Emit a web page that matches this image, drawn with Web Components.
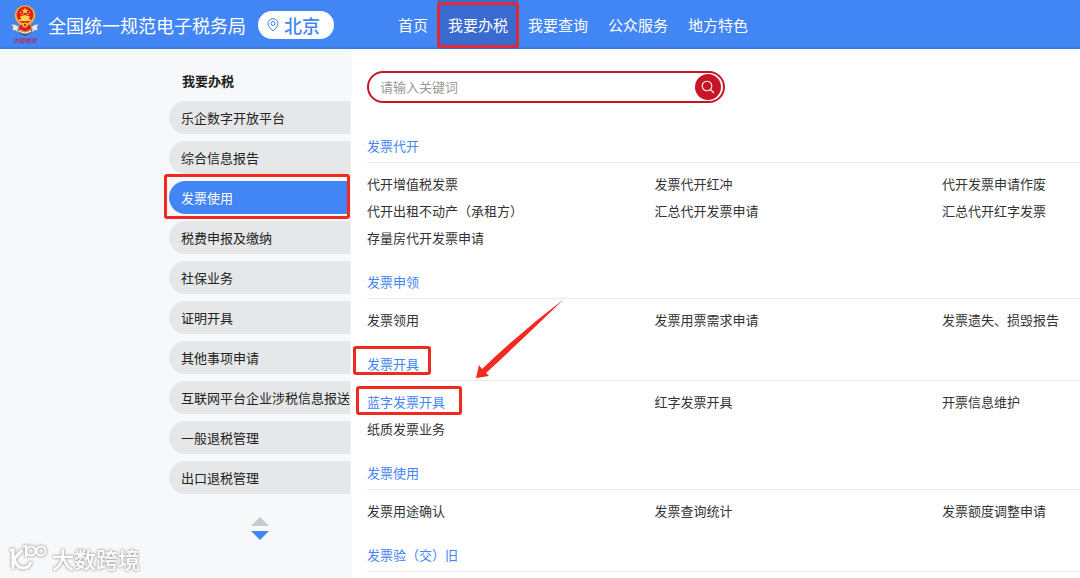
<!DOCTYPE html>
<html lang="zh-CN">
<head>
<meta charset="UTF-8">
<meta name="viewport" content="width=device-width, initial-scale=1">
<title>全国统一规范电子税务局</title>
<style>
    :root {
        --color-blue: #4285f4;
        --color-blue-dark: #386acf;
        --color-red: #c71526;
        --color-mark: #f3281f;
        --color-text: #333;
    }
    body {
        margin: 0;
        font-family: "Noto Sans CJK SC", "Noto Sans", sans-serif;
        font-size: 13px;
        line-height: 20px;
        color: var(--color-text);
    }
</style>
</head>
<body>
<tax-app></tax-app>

<script>
// Site header: emblem, site name, region button and the slotted navigation
class TaxHeader extends HTMLElement {
    constructor() {
        super();
        this.attachShadow({ mode: 'open' });
        this.shadowRoot.innerHTML = `
            <style>
                :host {
                    display: block;
                    flex: none;
                    background: linear-gradient(to top, #3a74d8, var(--color-blue) 3px);
                    color: white;
                }
                header {
                    display: flex;
                    align-items: center;
                    height: 49px;
                    padding-left: 10px;
                }
                .emblem {
                    width: 30px;
                    height: 42px;
                }
                h1 {
                    margin: 0 12px 0 8px;
                    font-size: 18px;
                    font-weight: 400;
                    white-space: nowrap;
                }
                button {
                    display: flex;
                    align-items: center;
                    gap: 5px;
                    height: 28px;
                    padding: 0 14px 0 9px;
                    border: 0;
                    border-radius: 14px;
                    background: white;
                    color: var(--color-blue);
                    font: 500 18px/28px "Noto Sans CJK SC", sans-serif;
                    white-space: nowrap;
                }
                nav {
                    display: flex;
                    align-self: stretch;
                    margin-left: 54px;
                }
            </style>
            <header>
                <svg class="emblem" viewBox="0 0 30 42" aria-hidden="true">
                    <path d="M1 20 Q6 20 9 23 L21 23 Q24 20 29 20 L27 23 L28 26 Q23 26 20 30 L10 30 Q7 26 2 26 L3 23 Z" fill="#e8edf2" stroke="#727d89" stroke-width="0.6"/>
                    <path d="M7 24 Q15 32 23 24 L21 29 L15 32 L9 29 Z" fill="#46515e"/>
                    <path d="M9 27 Q15 31 21 27" fill="none" stroke="#f5f6f7" stroke-width="1.5"/>
                    <path d="M10 20 L20 20 L22 25 L15 28 L8 25 Z" fill="#d91f1d" stroke="#e8a137" stroke-width="0.8"/>
                    <circle cx="15" cy="11.5" r="10.2" fill="#efb23d"/>
                    <circle cx="15" cy="11" r="8.4" fill="#e3201b"/>
                    <path d="M15 3.5 l1 2.3 2.5 .1 -2 1.6 .7 2.4 -2.2 -1.4 -2.2 1.4 .7 -2.4 -2 -1.6 2.5 -.1 Z" fill="#ffd84a"/>
                    <g fill="#ffd84a">
                        <circle cx="10.5" cy="8.5" r="0.7"/>
                        <circle cx="12" cy="10.5" r="0.7"/>
                        <circle cx="18" cy="10.5" r="0.7"/>
                        <circle cx="19.5" cy="8.5" r="0.7"/>
                        <path d="M10 12.5 L15 11 L20 12.5 V13.5 H19 V15.5 H21 V17 H9 V15.5 H11 V13.5 H10 Z"/>
                    </g>
                    <circle cx="15" cy="21" r="2.6" fill="#f2bc43"/>
                    <circle cx="15" cy="21" r="1.2" fill="#d91f1d"/>
                    <text x="15" y="39" text-anchor="middle" font-size="6" font-weight="500" font-style="italic" fill="#b32350">中国税务</text>
                </svg>
                <h1>全国统一规范电子税务局</h1>
                <button type="button">
                    <svg width="12" height="14" viewBox="0 0 12 14" fill="none" stroke="currentColor" aria-hidden="true">
                        <path d="M6 13 C3 10 1 8 1 5.5 A5 4.8 0 0 1 11 5.5 C11 8 9 10 6 13 Z"/>
                        <circle cx="6" cy="5.5" r="2"/>
                    </svg>
                    北京
                </button>
                <nav><slot></slot></nav>
            </header>
        `;
    }
}

// Top level navigation link
class NavItem extends HTMLElement {
    constructor() {
        super();
        this.attachShadow({ mode: 'open' });
        this.shadowRoot.innerHTML = `
            <style>
                :host {
                    display: flex;
                    position: relative;
                }
                a {
                    display: flex;
                    align-items: center;
                    padding: 0 10px;
                    color: white;
                    font-size: 15px;
                    text-decoration: none;
                    white-space: nowrap;
                }
                :host([active]) a {
                    background: var(--color-blue-dark);
                }
                :host([active])::after {
                    content: "";
                    position: absolute;
                    inset: 2px -1px 1px;
                    border: 3px solid #dc2a38;
                    border-radius: 3px;
                    pointer-events: none;
                }
            </style>
            <a href="#"><slot></slot></a>
        `;
    }
}

// Left column with the list of tax services and its scroll buttons
class SideMenu extends HTMLElement {
    constructor() {
        super();
        this.attachShadow({ mode: 'open' });
        this.shadowRoot.innerHTML = `
            <style>
                :host {
                    display: block;
                    flex: 0 0 350px;
                    box-sizing: border-box;
                    padding: 22px 0 0 169px;
                    background: #f7f8fa;
                }
                h2 {
                    margin: 0 0 10px 13px;
                    font-size: 13px;
                    font-weight: 700;
                    line-height: 20px;
                    color: #222;
                }
                nav {
                    display: flex;
                    flex-direction: column;
                    gap: 7px;
                }
                .pager {
                    display: flex;
                    flex-direction: column;
                    align-items: center;
                    gap: 5px;
                    margin-top: 23px;
                }
                button {
                    display: block;
                    padding: 0;
                    border: 0;
                    background: none;
                    line-height: 0;
                    color: #c8c9cb;
                }
                .next {
                    color: var(--color-blue);
                }
            </style>
            <h2>我要办税</h2>
            <nav aria-label="我要办税"><slot></slot></nav>
            <div class="pager">
                <button type="button" aria-label="上一页">
                    <svg width="18" height="9" viewBox="0 0 18 9"><path d="M9 0 L18 9 H0 Z" fill="currentColor"/></svg>
                </button>
                <button type="button" class="next" aria-label="下一页">
                    <svg width="18" height="9" viewBox="0 0 18 9"><path d="M0 0 H18 L9 9 Z" fill="currentColor"/></svg>
                </button>
            </div>
        `;
    }
}

class SideItem extends HTMLElement {
    constructor() {
        super();
        this.attachShadow({ mode: 'open' });
        this.shadowRoot.innerHTML = `
            <style>
                :host {
                    display: block;
                    position: relative;
                }
                a {
                    display: block;
                    padding-left: 12px;
                    border-radius: 17px 0 0 17px;
                    background: #e6e7e9;
                    color: #222;
                    line-height: 33px;
                    text-decoration: none;
                    white-space: nowrap;
                }
                :host([active]) a {
                    background: var(--color-blue);
                    color: white;
                }
                :host([active])::after {
                    content: "";
                    position: absolute;
                    inset: -7px 0 -5px -5px;
                    border: 3px solid var(--color-mark);
                    border-radius: 3px;
                    pointer-events: none;
                }
            </style>
            <a href="#"><slot></slot></a>
        `;
    }
}

// Rounded keyword search
class SearchBox extends HTMLElement {
    constructor() {
        super();
        this.attachShadow({ mode: 'open' });
        this.shadowRoot.innerHTML = `
            <style>
                :host {
                    display: block;
                    max-width: 358px;
                }
                form {
                    display: flex;
                    align-items: center;
                    box-sizing: border-box;
                    height: 32px;
                    padding: 0 2px 0 11px;
                    border: 2px solid var(--color-red);
                    border-radius: 16px;
                    background: white;
                }
                input {
                    flex: 1;
                    min-width: 0;
                    padding: 0;
                    border: 0;
                    outline: 0;
                    background: none;
                    font: inherit;
                }
                input::placeholder {
                    color: #999;
                }
                button {
                    display: grid;
                    place-items: center;
                    width: 26px;
                    height: 26px;
                    padding: 0;
                    border: 0;
                    border-radius: 50%;
                    background: var(--color-red);
                    color: white;
                }
            </style>
            <form>
                <input type="text" aria-label="请输入关键词" placeholder="请输入关键词">
                <button type="button" aria-label="搜索">
                    <svg width="14" height="14" viewBox="0 0 14 14" fill="none" stroke="currentColor" stroke-width="1.1">
                        <circle cx="6" cy="6" r="4.8"/>
                        <path d="M9.5 9.5 L13 13"/>
                    </svg>
                </button>
            </form>
        `;
    }
}

// Titled group of service links, slotted into three columns
class ServiceGroup extends HTMLElement {
    constructor() {
        super();
        this.attachShadow({ mode: 'open' });
        this.shadowRoot.innerHTML = `
            <style>
                :host {
                    display: block;
                    position: relative;
                    margin-bottom: 21px;
                }
                h3 {
                    margin: 0;
                    padding-bottom: 6px;
                    border-bottom: 1px solid #ebebed;
                    color: var(--color-blue);
                    font-size: 13px;
                    font-weight: 400;
                    line-height: 20px;
                }
                h3 span {
                    display: inline-block;
                    position: relative;
                }
                :host([marked]) h3 span::after {
                    content: "";
                    position: absolute;
                    inset: -8px -12px -1px -14px;
                    border: 3px solid var(--color-mark);
                    border-radius: 3px;
                }
                .links {
                    display: grid;
                    grid-template-columns: 25fr 25fr 12fr;
                    padding-top: 7px;
                }
                .arrow {
                    display: none;
                    position: absolute;
                    left: 108px;
                    top: -55px;
                    pointer-events: none;
                }
                :host([marked]) .arrow {
                    display: block;
                }
            </style>
            <h3><span>${this.getAttribute('heading')}</span></h3>
            <div class="links"><slot></slot></div>
            <svg class="arrow" width="90" height="82" viewBox="0 0 90 82" aria-hidden="true">
                <path d="M89 0 Q50 38 11 74 L14 77 L1 79 L4 66 L7 70 Q48 31 89 0 Z" fill="#f3281f"/>
            </svg>
        `;
    }
}

class ServiceLink extends HTMLElement {
    constructor() {
        super();
        this.attachShadow({ mode: 'open' });
        this.shadowRoot.innerHTML = `
            <style>
                :host {
                    display: block;
                    line-height: 27px;
                    white-space: nowrap;
                }
                a {
                    display: inline-block;
                    position: relative;
                    color: inherit;
                    text-decoration: none;
                }
                :host([marked]) a {
                    color: var(--color-blue);
                }
                :host([marked]) a::after {
                    content: "";
                    position: absolute;
                    inset: -2px -17px 0 -11px;
                    border: 3px solid var(--color-mark);
                    border-radius: 3px;
                }
            </style>
            <a href="#"><slot></slot></a>
        `;
    }
}

// Translucent watermark in the corner of the page
class WaterMark extends HTMLElement {
    constructor() {
        super();
        this.attachShadow({ mode: 'open' });
        this.shadowRoot.innerHTML = `
            <style>
                :host {
                    display: flex;
                    align-items: center;
                    gap: 4px;
                    position: absolute;
                    left: 8px;
                    bottom: 5px;
                    color: white;
                    font-size: 22px;
                    font-weight: 500;
                    line-height: 30px;
                    filter: drop-shadow(0 0 1px #aaa) drop-shadow(0 0 1px #bbb);
                    pointer-events: none;
                }
            </style>
            <svg width="40" height="30" viewBox="0 0 40 30" fill="none" stroke="currentColor" stroke-width="3" aria-hidden="true">
                <path d="M2 7 H5 V26"/>
                <path d="M14 7 L6 16 Q9 25 15 25 Q21 25 23 19"/>
                <path d="M15 3 H18 V14" stroke-width="2"/>
                <circle cx="23" cy="8" r="4.5" stroke-width="2"/>
                <circle cx="33" cy="8" r="4.5" stroke-width="2"/>
            </svg>
            <span><slot></slot></span>
        `;
    }
}

// Page shell
class TaxApp extends HTMLElement {
    constructor() {
        super();
        this.attachShadow({ mode: 'open' });

        const navItems = ['首页', '我要办税', '我要查询', '公众服务', '地方特色'];
        const sideItems = [
            '乐企数字开放平台', '综合信息报告', '发票使用', '税费申报及缴纳', '社保业务',
            '证明开具', '其他事项申请', '互联网平台企业涉税信息报送', '一般退税管理', '出口退税管理'
        ];
        const groups = [
            { heading: '发票代开', links: [
                '代开增值税发票', '发票代开红冲', '代开发票申请作废',
                '代开出租不动产（承租方）', '汇总代开发票申请', '汇总代开红字发票',
                '存量房代开发票申请'
            ] },
            { heading: '发票申领', links: ['发票领用', '发票用票需求申请', '发票遗失、损毁报告'] },
            { heading: '发票开具', marked: true, links: ['蓝字发票开具', '红字发票开具', '开票信息维护', '纸质发票业务'] },
            { heading: '发票使用', links: ['发票用途确认', '发票查询统计', '发票额度调整申请'] },
            { heading: '发票验（交）旧', links: [] }
        ];

        this.shadowRoot.innerHTML = `
            <style>
                :host {
                    display: flex;
                    flex-direction: column;
                    position: relative;
                    height: 100vh;
                    background: white;
                }
                .body {
                    display: flex;
                    flex: 1;
                    min-height: 0;
                }
                main {
                    flex: 1;
                    min-width: 0;
                    padding: 22px 0 0 16px;
                    border-left: 1px solid #f0f1f3;
                    overflow: hidden auto;
                    scrollbar-width: none;
                }
                search-box {
                    margin-bottom: 33px;
                }
            </style>
            <tax-header>
                ${navItems.map(item => `<nav-item${item === '我要办税' ? ' active' : ''}>${item}</nav-item>`).join('')}
            </tax-header>
            <div class="body">
                <side-menu>
                    ${sideItems.map(item => `<side-item${item === '发票使用' ? ' active' : ''}>${item}</side-item>`).join('')}
                </side-menu>
                <main>
                    <search-box></search-box>
                    ${groups.map(group => `
                        <service-group heading="${group.heading}"${group.marked ? ' marked' : ''}>
                            ${group.links.map(link => `<service-link${link === '蓝字发票开具' ? ' marked' : ''}>${link}</service-link>`).join('')}
                        </service-group>
                    `).join('')}
                </main>
            </div>
            <water-mark>大数跨境</water-mark>
        `;
    }
}

customElements.define('tax-header', TaxHeader);
customElements.define('nav-item', NavItem);
customElements.define('side-menu', SideMenu);
customElements.define('side-item', SideItem);
customElements.define('search-box', SearchBox);
customElements.define('service-group', ServiceGroup);
customElements.define('service-link', ServiceLink);
customElements.define('water-mark', WaterMark);
customElements.define('tax-app', TaxApp);
</script>
</body>
</html>
